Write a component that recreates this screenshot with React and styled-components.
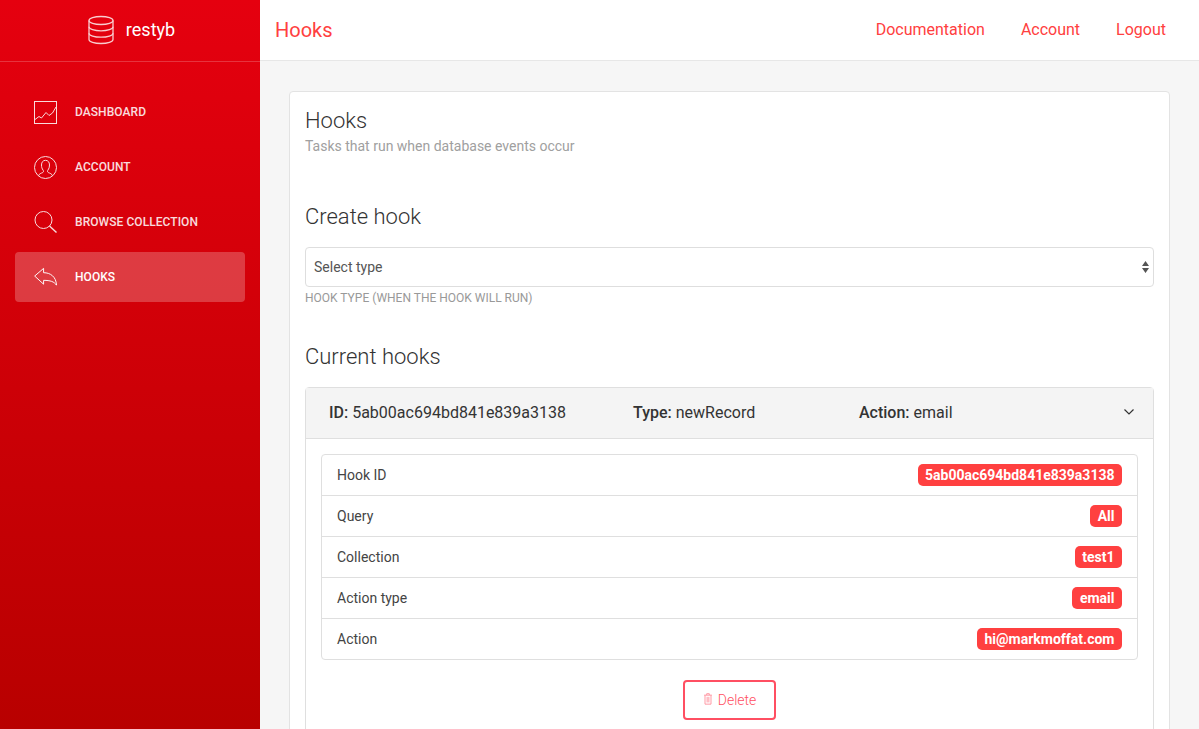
import React from 'react'
import styled, { createGlobalStyle } from 'styled-components'

const GlobalStyle = createGlobalStyle`
html, body {
  margin: 0;
  height: 100%;
  overflow: hidden;
  font-family: Roboto, "Liberation Sans", sans-serif;
  background: #f6f6f6;
}
* { box-sizing: border-box; }
`

const Page = styled.div`
display: flex;
height: 100vh;
overflow: hidden;
`

const Sidebar = styled.aside`
width: 260px;
flex-shrink: 0;
background: linear-gradient(180deg, #e5000f 0%, #b80000 100%);
color: #fff;
`

const Brand = styled.div`
height: 62px;
display: flex;
align-items: center;
justify-content: center;
gap: 12px;
padding: 0 0 2px 3px;
border-bottom: 1px solid rgba(255, 255, 255, 0.2);
font-size: 18px;
font-weight: 400;
`

const Nav = styled.nav`
display: flex;
flex-direction: column;
gap: 5px;
padding: 25px 15px 0;
`

const NavItem = styled.a`
height: 50px;
display: flex;
align-items: center;
gap: 18px;
padding-left: 19px;
border-radius: 4px;
font-size: 12px;
font-weight: 500;
letter-spacing: 0.06px;
text-transform: uppercase;
color: #fff;
opacity: ${p => (p.$active ? 1 : 0.86)};
background: ${p => (p.$active ? 'rgba(255, 255, 255, 0.23)' : 'transparent')};
`

const Main = styled.main`
flex: 1;
min-width: 0;
`

const Topbar = styled.header`
height: 61px;
display: flex;
align-items: center;
justify-content: space-between;
padding: 0 33px 2px 15px;
background: #fff;
border-bottom: 1px solid #e7e7e7;
color: #ff4040;
`

const PageName = styled.div`
font-size: 20px;
padding-top: 1px;
`

const TopLinks = styled.div`
display: flex;
gap: 36px;
font-size: 16px;
`

const Content = styled.div`
padding: 30px 29px 0 29px;
`

const Card = styled.section`
background: #fff;
border: 1px solid #e3e3e3;
border-radius: 4px;
padding: 15px 15px 30px;
`

const Title = styled.h4`
margin: 0;
font-size: 22px;
line-height: 28px;
font-weight: 300;
color: #333;
`

const Subtitle = styled.p`
margin: 1px 0 0;
font-size: 14px;
line-height: 20px;
font-weight: 400;
color: #a0a0a0;
`

const SectionTitle = styled(Title)`
margin-top: ${p => p.$top}px;
`

const SelectBox = styled.div`
position: relative;
height: 40px;
margin-top: 16px;
padding-left: 8px;
display: flex;
align-items: center;
border: 1px solid #dedede;
border-radius: 4px;
font-size: 14px;
color: #555;
`

const Arrows = styled.svg`
position: absolute;
right: 4px;
top: 13px;
`

const Help = styled.div`
margin-top: 4px;
font-size: 12px;
line-height: 14px;
font-weight: 400;
text-transform: uppercase;
color: #999;
`

const Accordion = styled.div`
margin-top: 16px;
border: 1px solid #dfdfdf;
border-radius: 4px;
`

const AccordionHead = styled.div`
height: 51px;
display: grid;
grid-template-columns: 304px 226px 1fr 18px;
align-items: center;
padding: 0 12px 2px 23px;
background: #f4f4f4;
border-bottom: 1px solid #dfdfdf;
font-size: 16px;
color: #333;
b { font-weight: 500; }
`

const AccordionBody = styled.div`
padding: 15px 15px 60px;
`

const List = styled.div`
border: 1px solid #dfdfdf;
border-radius: 4px;
`

const Row = styled.div`
height: 41px;
display: flex;
align-items: center;
justify-content: space-between;
padding: 0 15px;
font-size: 14px;
color: #444;
&:not(:first-child) { border-top: 1px solid #dfdfdf; }
&:first-child { height: 40px; }
`

const Badge = styled.span`
padding: 0 7.5px;
height: 22px;
display: flex;
align-items: center;
border-radius: 5px;
background: #ff4040;
color: #fff;
font-size: 14px;
font-weight: 700;
`

const Actions = styled.div`
display: flex;
justify-content: center;
margin-top: 20px;
`

const DeleteButton = styled.button`
width: 93px;
height: 40px;
display: flex;
align-items: center;
justify-content: center;
gap: 5px;
background: #fff;
border: 2px solid #ff4f62;
border-radius: 4px;
color: #ff4f62;
font-family: inherit;
font-size: 14px;
font-weight: 300;
`

const StrokeIcon = styled.svg`
fill: none;
stroke: currentColor;
flex-shrink: 0;
`

const TrashSvg = styled(StrokeIcon)`
margin-bottom: 3px;
opacity: 0.6;
`

const DatabaseIcon = () => (
  <StrokeIcon width="26" height="30" viewBox="0 0 26 30" strokeWidth="1.3" opacity="0.8">
    <ellipse cx="13" cy="5.5" rx="12" ry="4" />
    <path d="M1 5.500V24.500C1 26.700 6.400 28.500 13 28.500S25 26.700 25 24.500V5.500" />
    <path d="M1 11.800C1 14 6.400 15.800 13 15.800S25 14 25 11.800" />
    <path d="M1 18.200C1 20.400 6.400 22.200 13 22.200S25 20.400 25 18.200" />
  </StrokeIcon>
)

const ChartIcon = () => (
  <StrokeIcon width="23" height="23" viewBox="0 0 23 23" strokeWidth="1">
    <rect x="0.500" y="0.500" width="22" height="22" />
    <path d="M1 18.500L5 15.500L7.500 17L12 11.500L15 14.500L18.500 12L22 6" />
  </StrokeIcon>
)

const UserIcon = () => (
  <StrokeIcon width="23" height="23" viewBox="0 0 23 23" strokeWidth="1">
    <circle cx="11.500" cy="11.500" r="11" />
    <path d="M4.500 19.800C5 17.800 7 17.300 8.800 16.500C9.800 16 9.600 14.800 9 14C8 12.800 7.500 11 7.500 9C7.500 6.200 9 4.300 11.500 4.300S15.500 6.200 15.500 9C15.500 11 15 12.800 14 14C13.400 14.800 13.200 16 14.200 16.500C16 17.300 18 17.800 18.500 19.800" />
  </StrokeIcon>
)

const SearchIcon = () => (
  <StrokeIcon width="23" height="23" viewBox="0 0 23 23" strokeWidth="1">
    <circle cx="9.500" cy="9" r="8.500" />
    <path d="M15.500 15L22.500 21.500" strokeWidth="1.400" />
  </StrokeIcon>
)

const ReplyIcon = () => (
  <StrokeIcon width="23" height="20" viewBox="0 0 24 20" strokeWidth="1">
    <path d="M0.700 9L10 1V5.500C17 5.500 23 9.500 23.500 18.500C21 14.800 17 13.500 10 13.500V17.500Z" />
  </StrokeIcon>
)

const TrashIcon = () => (
  <TrashSvg width="10" height="12" viewBox="0 0 11 14" strokeWidth="1.100">
    <path d="M1 2.500H10M4 2.500V0.800H7V2.500M2 2.500V13H9V2.500M4.500 4.500V11M6.500 4.500V11" />
  </TrashSvg>
)

const nav = [
  { label: 'Dashboard', icon: <ChartIcon /> },
  { label: 'Account', icon: <UserIcon /> },
  { label: 'Browse collection', icon: <SearchIcon /> },
  { label: 'Hooks', icon: <ReplyIcon />, active: true },
]

const rows = [
  ['Hook ID', '5ab00ac694bd841e839a3138'],
  ['Query', 'All'],
  ['Collection', 'test1'],
  ['Action type', 'email'],
  ['Action', 'hi@markmoffat.com'],
]

export default function App() {
  return (
    <Page>
      <GlobalStyle />
      <Sidebar>
        <Brand><DatabaseIcon />restyb</Brand>
        <Nav>
          {nav.map(item => (
            <NavItem key={item.label} $active={item.active}>
              {item.icon}
              {item.label}
            </NavItem>
          ))}
        </Nav>
      </Sidebar>
      <Main>
        <Topbar>
          <PageName>Hooks</PageName>
          <TopLinks>
            <span>Documentation</span>
            <span>Account</span>
            <span>Logout</span>
          </TopLinks>
        </Topbar>
        <Content>
          <Card>
            <Title>Hooks</Title>
            <Subtitle>Tasks that run when database events occur</Subtitle>
            <SectionTitle $top={47}>Create hook</SectionTitle>
            <SelectBox>
              Select type
              <Arrows width="7" height="12" viewBox="0 0 7 12" fill="#555">
                <path d="M3.500 0L7 5H0ZM3.500 12L0 7H7Z" />
              </Arrows>
            </SelectBox>
            <Help>Hook type (when the hook will run)</Help>
            <SectionTitle $top={38}>Current hooks</SectionTitle>
            <Accordion>
              <AccordionHead>
                <span><b>ID:</b> 5ab00ac694bd841e839a3138</span>
                <span><b>Type:</b> newRecord</span>
                <span><b>Action:</b> email</span>
                <StrokeIcon width="12" height="8" viewBox="0 0 12 8" strokeWidth="1.200">
                  <path d="M1.500 1.500L6 6L10.500 1.500" />
                </StrokeIcon>
              </AccordionHead>
              <AccordionBody>
                <List>
                  {rows.map(([name, value]) => (
                    <Row key={name}>
                      {name}
                      <Badge>{value}</Badge>
                    </Row>
                  ))}
                </List>
                <Actions>
                  <DeleteButton><TrashIcon />Delete</DeleteButton>
                </Actions>
              </AccordionBody>
            </Accordion>
          </Card>
        </Content>
      </Main>
    </Page>
  )
}
